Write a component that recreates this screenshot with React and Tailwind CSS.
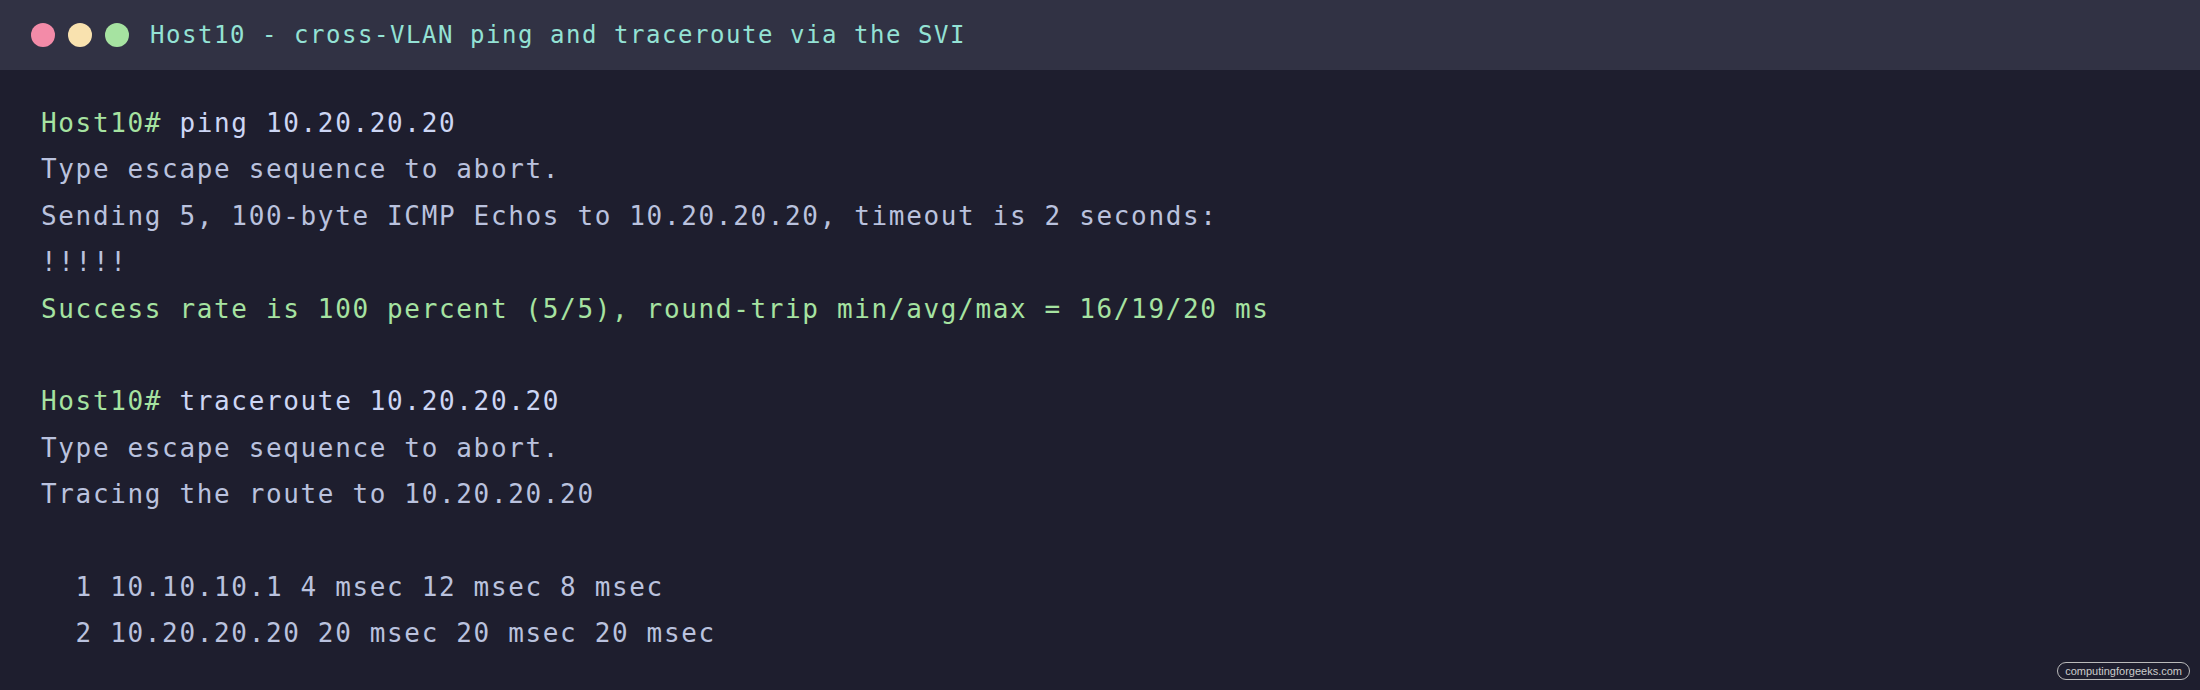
import React from 'react';

const mono = { fontFamily: '"DejaVu Sans Mono", "Liberation Mono", monospace' };

const lines = [
  { prompt: 'Host10#', cmd: ' ping 10.20.20.20' },
  { text: 'Type escape sequence to abort.' },
  { text: 'Sending 5, 100-byte ICMP Echos to 10.20.20.20, timeout is 2 seconds:' },
  { text: '!!!!!' },
  { text: 'Success rate is 100 percent (5/5), round-trip min/avg/max = 16/19/20 ms', ok: true },
  { text: '' },
  { prompt: 'Host10#', cmd: ' traceroute 10.20.20.20' },
  { text: 'Type escape sequence to abort.' },
  { text: 'Tracing the route to 10.20.20.20' },
  { text: '' },
  { text: '  1 10.10.10.1 4 msec 12 msec 8 msec' },
  { text: '  2 10.20.20.20 20 msec 20 msec 20 msec' },
];

export default function App() {
  return (
    <div className="relative w-[2200px] h-[690px] bg-[#1e1e2e] flex flex-col overflow-hidden" style={mono}>
      <div className="h-[70px] shrink-0 bg-[#313244] flex items-center pl-[31px]">
        <div className="flex items-center gap-[13px]">
          <span className="w-[24px] h-[24px] rounded-full bg-[#f38ba8]"></span>
          <span className="w-[24px] h-[24px] rounded-full bg-[#f9e2af]"></span>
          <span className="w-[24px] h-[24px] rounded-full bg-[#a6e3a1]"></span>
        </div>
        <div className="ml-[21px] text-[24px] tracking-[1.55px] text-[#94e2d5] whitespace-pre">
          Host10 - cross-VLAN ping and traceroute via the SVI
        </div>
      </div>

      <div className="pt-[30px] pl-[41px] text-[26px] tracking-[1.65px] leading-[46.4px] text-[#bac2de]">
        {lines.map((l, i) => (
          <div key={i} className="whitespace-pre h-[46.4px]">
            {l.prompt ? (
              <>
                <span className="text-[#a6e3a1]">{l.prompt}</span>
                <span className="text-[#cdd6f4]">{l.cmd}</span>
              </>
            ) : (
              <span className={l.ok ? 'text-[#a6e3a1]' : ''}>{l.text}</span>
            )}
          </div>
        ))}
      </div>

      <div
        className="absolute right-[10px] bottom-[10px] h-[18px] px-[7px] flex items-center rounded-full border border-[#bbbbbb] text-[11px] text-[#cccccc]"
        style={{ fontFamily: '"Liberation Sans", Arial, sans-serif' }}
      >
        computingforgeeks.com
      </div>
    </div>
  );
}
